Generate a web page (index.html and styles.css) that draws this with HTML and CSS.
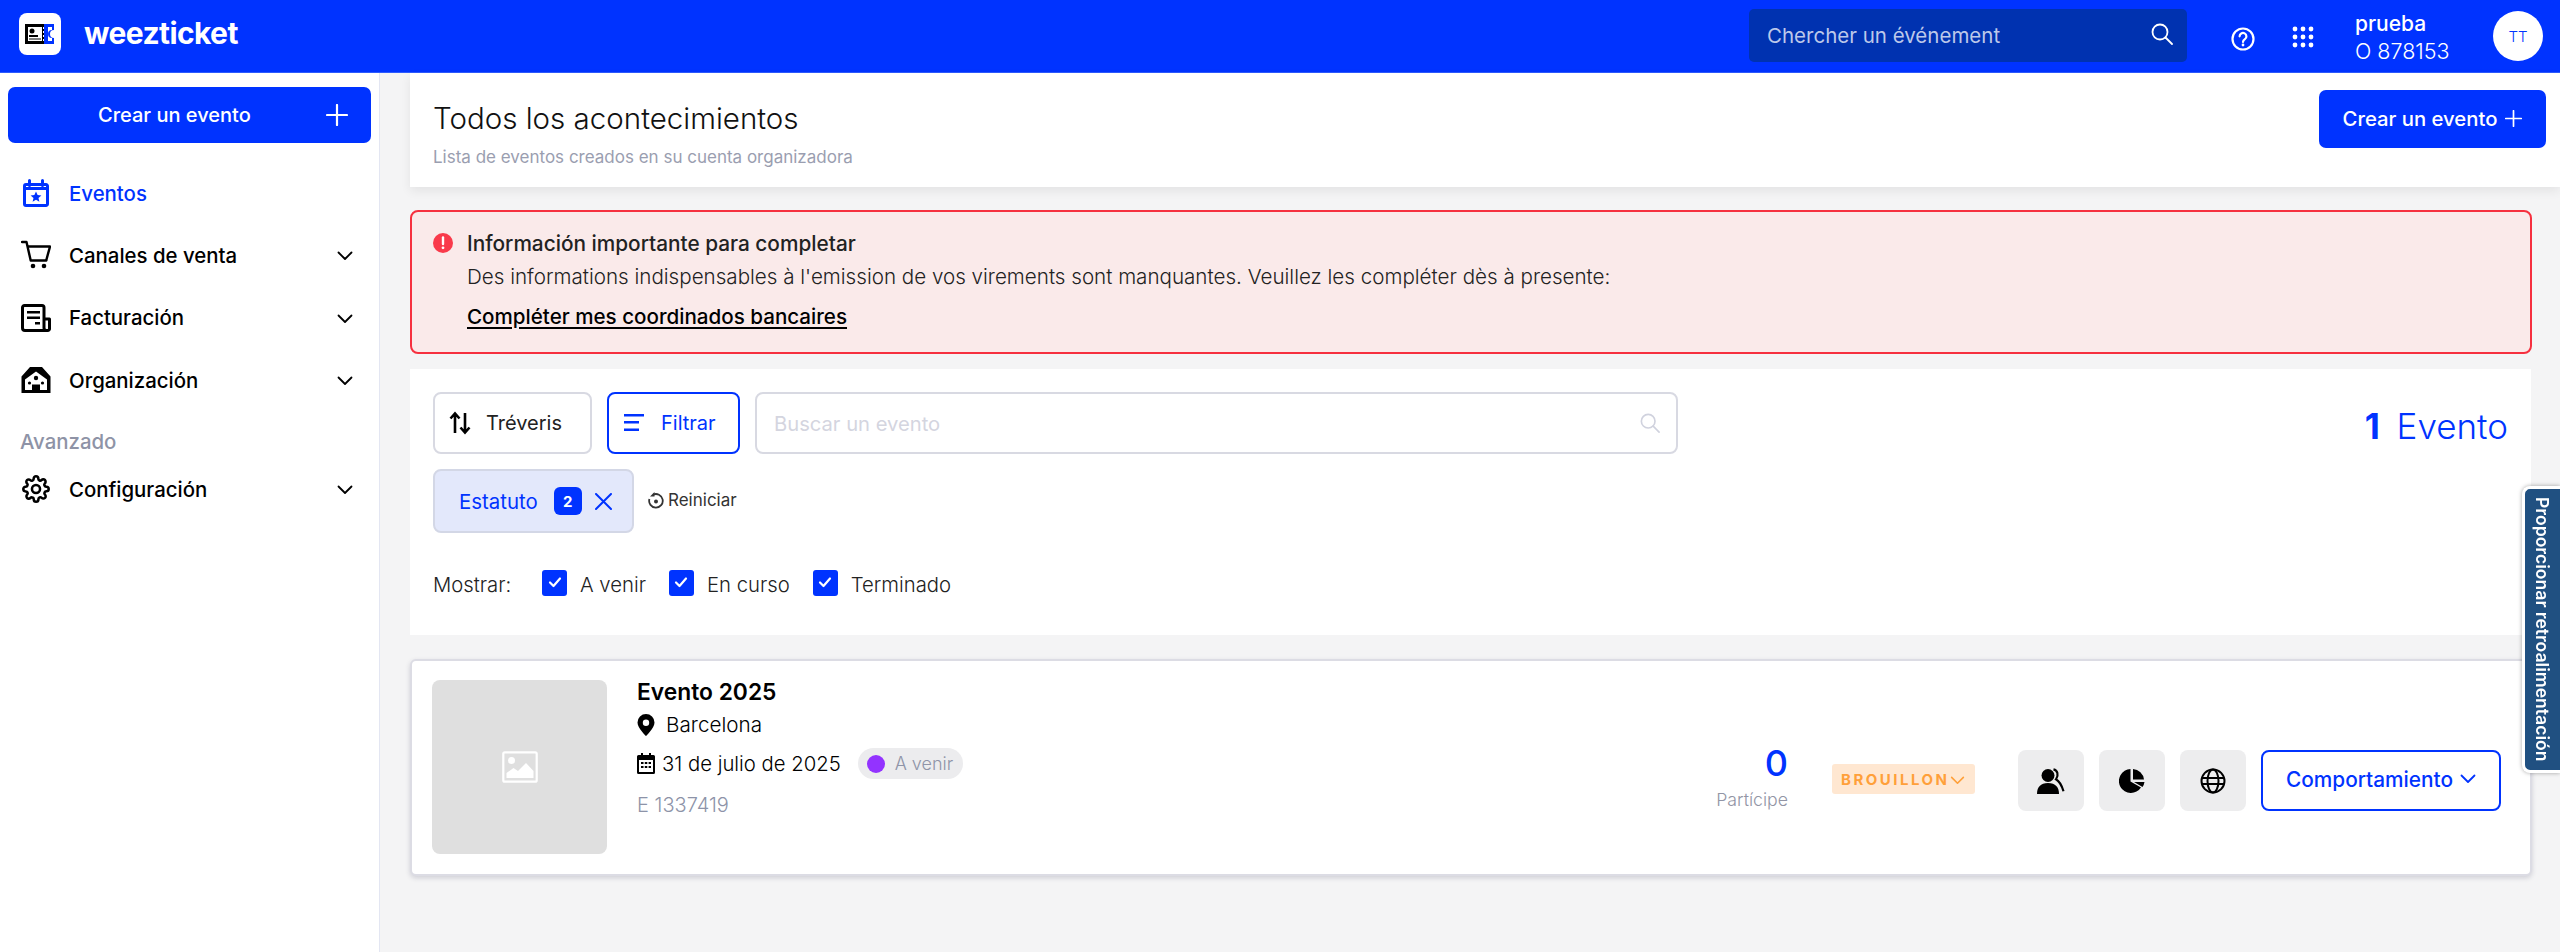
FILE: index.html
```html
<!DOCTYPE html>
<html lang="es">
<head>
<meta charset="utf-8">
<title>weezticket</title>
<link rel="stylesheet" href="styles.css">
</head>
<body>
<svg class="defs" aria-hidden="true">
  <symbol id="chev" viewBox="0 0 16 10"><path d="M1.5 1.5 8 8l6.500-6.500" fill="none" stroke="currentColor" stroke-width="1.800" stroke-linecap="round" stroke-linejoin="round"/></symbol>
  <symbol id="plus" viewBox="0 0 22 22"><path d="M11 1v20M1 11h20" fill="none" stroke="currentColor" stroke-width="2.200" stroke-linecap="round"/></symbol>
  <symbol id="search" viewBox="0 0 22 22"><circle cx="9" cy="9" r="7.500" fill="none" stroke="currentColor" stroke-width="1.800"/><path d="m14.500 14.500 6.500 6.500" fill="none" stroke="currentColor" stroke-width="1.800" stroke-linecap="round"/></symbol>
  <symbol id="check" viewBox="0 0 14 12"><path d="M2 6.500 5.500 10 12 2.500" fill="none" stroke="currentColor" stroke-width="2.200" stroke-linecap="round" stroke-linejoin="round"/></symbol>
</svg>

<header class="topbar">
  <div class="brand">
    <span class="logo">
      <svg width="30" height="20" viewBox="0 0 30 20"><path d="M1.500 1.500h17v17h-17z" fill="#fff" stroke="#000" stroke-width="3"/><path d="M19 0h10v6a4 4 0 0 0 0 8v6H19z" fill="#0033ff"/><path d="M23 3h4v3a4 4 0 0 0 0 8v3h-4z" fill="#fff"/><circle cx="7" cy="7" r="2.500"/><path d="M4 11h9v2H4zM4 14.500h12v1H4z"/><path d="M18.500 3v14" stroke="#fff" stroke-dasharray="2 2"/></svg>
    </span>
    <span class="wordmark">weezticket</span>
  </div>
  <div class="top-right">
    <div class="top-search">
      <span>Chercher un événement</span>
      <svg class="top-search-icon"><use href="#search"/></svg>
    </div>
    <svg class="help" width="24" height="24" viewBox="0 0 24 24"><circle cx="12" cy="12" r="10.500" fill="none" stroke="#fff" stroke-width="2.200"/><path d="M8.600 9.300a3.400 3.400 0 1 1 5.300 2.900c-1.200.8-1.900 1.300-1.900 2.700" fill="none" stroke="#fff" stroke-width="2.200" stroke-linecap="round"/><circle cx="12" cy="18" r="1.400" fill="#fff"/></svg>
    <svg class="apps" width="22" height="22" viewBox="0 0 22 22" fill="#fff"><circle cx="3" cy="3" r="2.400"/><circle cx="11" cy="3" r="2.400"/><circle cx="19" cy="3" r="2.400"/><circle cx="3" cy="11" r="2.400"/><circle cx="11" cy="11" r="2.400"/><circle cx="19" cy="11" r="2.400"/><circle cx="3" cy="19" r="2.400"/><circle cx="11" cy="19" r="2.400"/><circle cx="19" cy="19" r="2.400"/></svg>
    <div class="account">
      <span class="account-name">prueba</span>
      <span class="account-id">O 878153</span>
    </div>
    <span class="avatar">TT</span>
  </div>
</header>

<div class="shell">
  <aside class="sidebar">
    <button class="create-wide"><span>Crear un evento</span><svg class="plus-lg"><use href="#plus"/></svg></button>
    <nav class="nav">
      <a class="nav-row active">
        <svg class="nav-icon" viewBox="0 0 30 30"><path d="M5 6.500h20a1.500 1.500 0 0 1 1.500 1.500v18a1.500 1.500 0 0 1-1.500 1.500H5A1.500 1.500 0 0 1 3.500 26V8A1.500 1.500 0 0 1 5 6.500z" fill="none" stroke="currentColor" stroke-width="3"/><path d="M8.500 2.500v5M21.500 2.500v5" stroke="currentColor" stroke-width="3" stroke-linecap="round"/><path d="M3.500 9h23v3h-23z" fill="currentColor"/><path d="m15 13.500 1.600 3.500 3.800.4-2.900 2.500.9 3.800-3.400-2-3.400 2 .9-3.800-2.900-2.500 3.800-.4z" fill="currentColor"/></svg>
        <span class="nav-label">Eventos</span>
      </a>
      <a class="nav-row">
        <svg class="nav-icon" viewBox="0 0 30 30"><path d="M1 2h4.500l4.200 18.500h15.500" fill="none" stroke="currentColor" stroke-width="2.400" stroke-linecap="round" stroke-linejoin="round"/><path d="M6.500 6.500H29l-3.800 14" fill="none" stroke="currentColor" stroke-width="2.400" stroke-linejoin="round"/><circle cx="12" cy="26" r="2.300" fill="currentColor"/><circle cx="23" cy="26" r="2.300" fill="currentColor"/></svg>
        <span class="nav-label">Canales de venta</span>
        <svg class="nav-chev"><use href="#chev"/></svg>
      </a>
      <a class="nav-row">
        <svg class="nav-icon" viewBox="0 0 30 30"><path d="M23 16V4.500A2 2 0 0 0 21 2.500H3.500a2 2 0 0 0-2 2V25a2.500 2.500 0 0 0 2.500 2.500h22.500A2 2 0 0 0 28.500 25v-9z M23 16v9a2.500 2.500 0 0 0 2.500 2.500" fill="none" stroke="currentColor" stroke-width="3" stroke-linejoin="round"/><path d="M6 8h13v2.500H6zM6 13.500h13V16H6zM14 19h5v2.500h-5z" fill="currentColor"/></svg>
        <span class="nav-label">Facturación</span>
        <svg class="nav-chev"><use href="#chev"/></svg>
      </a>
      <a class="nav-row">
        <svg class="nav-icon" viewBox="0 0 30 30"><path fill-rule="evenodd" d="M9 2h12l8.500 9.500V28H.5V11.500zM15 6.500 4 14.500V25h7v-5.500h8V25h7V14.500z" fill="currentColor"/><circle cx="15" cy="13" r="2.200" fill="currentColor"/><circle cx="8.500" cy="18" r="1.600" fill="currentColor"/><circle cx="21.500" cy="18" r="1.600" fill="currentColor"/></svg>
        <span class="nav-label">Organización</span>
        <svg class="nav-chev"><use href="#chev"/></svg>
      </a>
      <div class="nav-section">Avanzado</div>
      <a class="nav-row">
        <svg class="nav-icon" viewBox="-1 -1 26 26"><circle cx="12" cy="12" r="3.500" fill="none" stroke="currentColor" stroke-width="2.200"/><path d="M19.400 15a1.650 1.650 0 0 0 .33 1.820l.06.06a2 2 0 0 1 0 2.830 2 2 0 0 1-2.830 0l-.06-.06a1.650 1.650 0 0 0-1.820-.33 1.650 1.650 0 0 0-1 1.510V21a2 2 0 0 1-2 2 2 2 0 0 1-2-2v-.09A1.650 1.650 0 0 0 9 19.400a1.650 1.650 0 0 0-1.820.33l-.06.06a2 2 0 0 1-2.830 0 2 2 0 0 1 0-2.830l.06-.06a1.650 1.650 0 0 0 .33-1.820 1.650 1.650 0 0 0-1.510-1H3a2 2 0 0 1-2-2 2 2 0 0 1 2-2h.09A1.650 1.650 0 0 0 4.600 9a1.650 1.650 0 0 0-.33-1.820l-.06-.06a2 2 0 0 1 0-2.830 2 2 0 0 1 2.830 0l.06.06a1.650 1.650 0 0 0 1.820.33H9a1.650 1.650 0 0 0 1-1.510V3a2 2 0 0 1 2-2 2 2 0 0 1 2 2v.09a1.650 1.650 0 0 0 1 1.510 1.650 1.650 0 0 0 1.820-.33l.06-.06a2 2 0 0 1 2.830 0 2 2 0 0 1 0 2.830l-.06.06a1.650 1.650 0 0 0-.33 1.820V9a1.650 1.650 0 0 0 1.510 1H21a2 2 0 0 1 2 2 2 2 0 0 1-2 2h-.09a1.650 1.650 0 0 0-1.510 1z" fill="none" stroke="currentColor" stroke-width="2.200" stroke-linejoin="round"/></svg>
        <span class="nav-label">Configuración</span>
        <svg class="nav-chev"><use href="#chev"/></svg>
      </a>
    </nav>
  </aside>

  <main class="main">
    <section class="page-head">
      <div class="page-heading">
        <h1 class="page-title">Todos los acontecimientos</h1>
        <p class="page-sub">Lista de eventos creados en su cuenta organizadora</p>
      </div>
      <button class="create-btn"><span>Crear un evento</span><svg class="plus-sm"><use href="#plus"/></svg></button>
    </section>

    <div class="content">
      <section class="alert">
        <svg class="alert-icon" width="20" height="20" viewBox="0 0 20 20"><circle cx="10" cy="10" r="10" fill="#f93a4b"/><path d="M10 4.500v6.500" stroke="#fff" stroke-width="2.400" stroke-linecap="round"/><circle cx="10" cy="14.800" r="1.400" fill="#fff"/></svg>
        <div>
          <div class="alert-title">Información importante para completar</div>
          <div class="alert-text">Des informations indispensables à l'emission de vos virements sont manquantes. Veuillez les compléter dès à presente:</div>
          <a class="alert-link">Compléter mes coordinados bancaires</a>
        </div>
      </section>

      <section class="filters">
        <div class="filter-row">
          <button class="tool-btn sort-btn">
            <svg width="22" height="24" viewBox="0 0 22 24"><path d="M6 22V3M1.500 7.500 6 2.500l4.500 5M16 2v19M11.500 16.500 16 21.500l4.500-5" fill="none" stroke="#000" stroke-width="2.600"/></svg>
            <span>Tréveris</span>
          </button>
          <button class="tool-btn filter-btn">
            <svg width="20" height="18" viewBox="0 0 20 18" fill="#0033ff"><path d="M0 0h20v2.600H0zM0 7h15v2.600H0zM0 14.400h15V17H0z"/></svg>
            <span>Filtrar</span>
          </button>
          <div class="search-box">
            <span>Buscar un evento</span>
            <svg class="search-box-icon"><use href="#search"/></svg>
          </div>
          <div class="total"><b>1</b> Evento</div>
        </div>
        <div class="chip-row">
          <div class="chip">
            <span class="chip-label">Estatuto</span>
            <span class="chip-count">2</span>
            <svg width="17" height="17" viewBox="0 0 17 17"><path d="m1 1 15 15M16 1 1 16" stroke="#0033ff" stroke-width="2" stroke-linecap="round"/></svg>
          </div>
          <a class="reset">
            <svg width="16" height="17" viewBox="0 0 16 17"><path d="M5 2.700A6.800 6.800 0 1 1 1.400 7" fill="none" stroke="#333" stroke-width="1.800"/><path d="M6.500 0v4.500H2z" fill="#333"/><circle cx="8" cy="9.500" r="2" fill="#333"/></svg>
            <span>Reiniciar</span>
          </a>
        </div>
        <div class="show-row">
          <span class="show-label">Mostrar:</span>
          <label class="check"><span class="box"><svg><use href="#check"/></svg></span><span class="check-text">A venir</span></label>
          <label class="check"><span class="box"><svg><use href="#check"/></svg></span><span class="check-text">En curso</span></label>
          <label class="check"><span class="box"><svg><use href="#check"/></svg></span><span class="check-text">Terminado</span></label>
        </div>
      </section>

      <article class="card">
        <div class="thumb">
          <svg width="36" height="32" viewBox="0 0 36 32"><rect x="1.300" y="1.300" width="33.400" height="29.400" rx="1.500" fill="none" stroke="#fff" stroke-width="2.200"/><circle cx="9.500" cy="9.500" r="3.500" fill="#fff"/><path d="M4.500 27v-5l7-5 4.500 3 8-8 7.500 8v7z" fill="#fff"/></svg>
        </div>
        <div class="info">
          <h2 class="event-name">Evento 2025</h2>
          <div class="event-place">
            <svg width="18" height="22" viewBox="0 0 18 22"><path fill-rule="evenodd" d="M9 0a8.500 8.500 0 0 1 8.500 8.500C17.500 14 9 22 9 22S.5 14 .5 8.500A8.500 8.500 0 0 1 9 0zm0 5.500a3.200 3.200 0 1 0 0 6.400 3.200 3.200 0 0 0 0-6.400z"/></svg>
            <span>Barcelona</span>
          </div>
          <div class="event-date">
            <svg width="18" height="21" viewBox="0 0 18 21"><path fill-rule="evenodd" d="M4 0h2v2h6V0h2v2h2.500A1.500 1.500 0 0 1 18 3.500v16a1.500 1.500 0 0 1-1.500 1.500h-15A1.500 1.500 0 0 1 0 19.500v-16A1.500 1.500 0 0 1 1.500 2H4zM2 7v12h14V7z"/><path d="M4 9h2.500v2H4zM7.800 9h2.500v2H7.800zM11.600 9H14v2h-2.400zM4 13h2.500v2H4zM7.800 13h2.500v2H7.800zM11.600 13H14v2h-2.400z"/></svg>
            <span class="date-text">31 de julio de 2025</span>
            <span class="pill"><i class="pill-dot"></i>A venir</span>
          </div>
          <div class="event-id">E 1337419</div>
        </div>
        <div class="stat">
          <span class="stat-num">0</span>
          <span class="stat-label">Partícipe</span>
        </div>
        <div class="draft"><span>BROUILLON</span><svg class="draft-chev"><use href="#chev"/></svg></div>
        <div class="actions">
          <button class="icon-btn">
            <svg width="28" height="26" viewBox="0 0 28 26"><circle cx="11" cy="7.500" r="6.500"/><path d="M0 26c0-7 3.500-11 11-11s11 4 11 11z"/><path d="M16.500 1.300c4 .7 5.500 6 2.500 10 3.500 2 6 7 7.500 12" fill="none" stroke="#000" stroke-width="2.200"/></svg>
          </button>
          <button class="icon-btn">
            <svg width="26" height="26" viewBox="0 0 26 26"><path d="M11.500 1A12 12 0 1 0 22 19.500l-10.500-6z"/><path d="M14 1a11.800 11.800 0 0 1 11 10.500H14zM15 14h10.500a12 12 0 0 1-2 5z"/></svg>
          </button>
          <button class="icon-btn">
            <svg width="26" height="26" viewBox="0 0 26 26" fill="none" stroke="#000" stroke-width="2"><circle cx="13" cy="13" r="11.500"/><ellipse cx="13" cy="13" rx="5.500" ry="11.500"/><path d="M1.500 10h23M1.500 16h23"/></svg>
          </button>
          <button class="behave-btn"><span>Comportamiento</span><svg class="behave-chev"><use href="#chev"/></svg></button>
        </div>
      </article>
    </div>
  </main>
</div>

<div class="feedback">Proporcionar retroalimentación</div>
</body>
</html>
```

FILE: styles.css
```css
* { box-sizing: border-box; }
html, body { margin: 0; padding: 0; }
body {
  width: 2560px;
  height: 952px;
  overflow: hidden;
  font-family: Inter, "Liberation Sans", sans-serif;
  color: #111;
  background: #f4f4f5;
}
button { font: inherit; cursor: pointer; }
h1, h2, p { margin: 0; }
svg { display: block; flex: none; }
.defs { position: absolute; width: 0; height: 0; }

.topbar {
  height: 73px;
  background: #0033ff;
  border-bottom: 1px solid #2d5bff;
  display: flex;
  align-items: center;
  justify-content: space-between;
  padding: 0 17px 0 19px;
}
.brand { display: flex; align-items: center; gap: 23px; margin-top: -4px; }
.logo {
  width: 42px;
  height: 42px;
  background: #fff;
  border-radius: 8px;
  display: flex;
  align-items: center;
  justify-content: center;
}
.wordmark { color: #fff; font-size: 30px; font-weight: 700; letter-spacing: -0.6px; margin-bottom: 3px; }
.top-right { display: flex; align-items: center; }
.top-search {
  width: 438px;
  height: 53px;
  background: #0032b0;
  border-radius: 5px;
  padding: 0 14px 0 18px;
  margin-top: -1px;
  display: flex;
  align-items: center;
  justify-content: space-between;
  color: #bcc8ea;
  font-size: 20.500px;
}
.top-search-icon { width: 22px; height: 22px; color: #fff; margin-top: -3px; }
.help { margin-left: 44px; margin-top: 5px; }
.apps { margin-left: 37px; margin-top: 2px; }
.account { margin-left: 41px; width: 138px; display: flex; flex-direction: column; gap: 2px; color: #fff; padding-top: 3px; }
.account-name { font-weight: 500; font-size: 21px; line-height: 24px; }
.account-id { font-size: 21.500px; font-weight: 300; line-height: 26px; }
.avatar {
  width: 50px;
  height: 50px;
  border-radius: 50%;
  background: #fff;
  color: #0033ff;
  font-size: 15px;
  font-weight: 300;
  display: flex;
  align-items: center;
  justify-content: center;
}

.shell { display: flex; height: 879px; }
.sidebar {
  width: 380px;
  flex: none;
  background: #fff;
  border-right: 1px solid #e3e6f2;
  padding-top: 14px;
}
.create-wide {
  width: 363px;
  height: 56px;
  margin-left: 8px;
  border: 0;
  border-radius: 7px;
  background: #0033ff;
  color: #fff;
  font-size: 20px;
  font-weight: 500;
  display: flex;
  align-items: center;
  justify-content: space-between;
  padding: 0 23px 0 90px;
}
.plus-lg { width: 22px; height: 22px; }
.nav { margin-top: 19px; }
.nav-row {
  height: 62.300px;
  display: flex;
  align-items: center;
  padding: 0 26px 0 21px;
  color: #000;
}
.nav-row.active { color: #0033ff; }
.nav-icon { width: 30px; height: 30px; }
.nav-label { margin-left: 18px; font-size: 20.400px; font-weight: 500; flex: 1; }
.nav-chev { width: 16px; height: 10px; margin-top: 2px; }
.nav-section {
  padding: 19px 0 0 20px;
  height: 47px;
  color: #8e93a6;
  font-size: 20.400px;
  font-weight: 500;
  line-height: 24px;
}

.main { flex: 1; min-width: 0; }
.page-head {
  margin-left: 30px;
  height: 114px;
  background: #fff;
  box-shadow: 0 4px 10px rgba(0, 0, 0, 0.07);
  display: flex;
  align-items: flex-start;
  justify-content: space-between;
  padding: 17px 14px 0 23px;
}
.page-heading { margin-top: 7px; }
.page-title { font-size: 29.500px; font-weight: 300; line-height: 42px; color: #111; }
.page-sub { margin-top: 7px; font-size: 17px; font-weight: 400; color: #9a9eb0; line-height: 22px; }
.create-btn {
  width: 227px;
  height: 58px;
  border: 0;
  border-radius: 7px;
  background: #0033ff;
  color: #fff;
  font-size: 20.300px;
  font-weight: 500;
  display: flex;
  align-items: center;
  justify-content: center;
  gap: 8px;
  padding-bottom: 2px;
}
.plus-sm { width: 17px; height: 17px; }

.content { padding: 23px 28px 0 30px; }
.alert {
  height: 144px;
  background: #faeaea;
  border: 2px solid #f6303f;
  border-radius: 8px;
  display: flex;
  gap: 14px;
  padding: 19px 21px 0;
}
.alert-icon { margin-top: 2px; }
.alert-title { font-size: 20.800px; font-weight: 500; line-height: 26px; color: #222; }
.alert-text { margin-top: 7px; font-size: 20.600px; font-weight: 300; line-height: 26px; color: #222; }
.alert-link { display: block; margin-top: 14px; font-size: 20.600px; font-weight: 500; line-height: 26px; color: #000; text-decoration: underline; text-underline-offset: 3px; }

.filters {
  margin-top: 15px;
  margin-right: 1px;
  height: 266px;
  background: #fff;
  padding: 23px 23px 0;
}
.filter-row { display: flex; align-items: center; height: 62px; }
.tool-btn {
  height: 62px;
  background: #fff;
  border-radius: 8px;
  display: flex;
  align-items: center;
  font-size: 20px;
  padding: 0;
}
.sort-btn { width: 159px; border: 2px solid #d8d9e2; color: #222; gap: 15px; padding-left: 14px; margin-right: 15px; }
.filter-btn { width: 133px; border: 2px solid #0033ff; color: #0033ff; gap: 17px; padding-left: 15px; margin-right: 15px; }
.search-box {
  width: 923px;
  height: 62px;
  border: 2px solid #d8d9e2;
  border-radius: 8px;
  display: flex;
  align-items: center;
  justify-content: space-between;
  padding: 0 16px 0 17px;
  color: #d4d5df;
  font-size: 20.200px;
}
.search-box-icon { width: 20px; height: 20px; color: #d0d2de; }
.total { margin-left: auto; margin-top: 5px; color: #0033ff; font-size: 35px; font-weight: 300; }
.total b { font-weight: 700; margin-right: 7px; }
.chip-row { display: flex; align-items: center; margin-top: 15px; }
.chip {
  width: 201px;
  height: 64px;
  background: #e3e8fb;
  border: 2px solid #d3d7e6;
  border-radius: 8px;
  display: flex;
  align-items: center;
  padding-left: 24px;
}
.chip-label { color: #0033ff; font-size: 20.400px; font-weight: 400; }
.chip-count {
  width: 28px;
  height: 28px;
  margin: 0 13px 0 16px;
  border-radius: 6px;
  background: #0033ff;
  color: #fff;
  font-size: 15px;
  font-weight: 700;
  display: flex;
  align-items: center;
  justify-content: center;
}
.reset { display: flex; align-items: center; gap: 4px; margin-left: 14px; margin-top: -2px; font-size: 17px; color: #333; }
.show-row { display: flex; align-items: center; height: 26px; margin-top: 37px; font-size: 20.300px; font-weight: 300; color: #222; }
.show-label { width: 109px; padding-top: 2px; }
.check { display: flex; align-items: center; gap: 13px; margin-right: 23px; }
.check-text { padding-top: 2px; }
.box {
  width: 25px;
  height: 26px;
  border-radius: 3px;
  background: #0033ff;
  color: #fff;
  display: flex;
  align-items: center;
  justify-content: center;
}
.box svg { width: 14px; height: 12px; margin-top: -3px; }

.card {
  margin-top: 24px;
  height: 217px;
  background: #fff;
  border: 2px solid #dcdce4;
  border-radius: 6px;
  box-shadow: 0 2px 5px rgba(40, 40, 70, 0.18);
  display: flex;
  padding: 19px 29px 0 20px;
}
.thumb {
  width: 175px;
  height: 174px;
  background: #dfdfdf;
  border-radius: 8px;
  display: flex;
  align-items: center;
  justify-content: center;
}
.info { margin-left: 30px; flex: 1; }
.event-name { font-size: 22.800px; font-weight: 600; line-height: 26px; margin-top: -1px; color: #000; }
.event-place { display: flex; align-items: center; gap: 11px; margin-top: 8px; font-size: 20.700px; font-weight: 300; line-height: 24px; color: #000; }
.event-date { display: flex; align-items: center; margin-top: 11px; height: 31px; font-size: 20.300px; font-weight: 300; color: #000; }
.date-text { margin-left: 7px; }
.pill {
  margin-left: 17px;
  height: 31px;
  width: 105px;
  border-radius: 16px;
  background: #ececee;
  color: #8f94a8;
  font-size: 18px;
  font-weight: 300;
  display: flex;
  align-items: center;
  gap: 10px;
  padding-left: 9px;
}
.pill-dot { width: 18px; height: 18px; border-radius: 50%; background: #9333ff; }
.event-id { margin-top: 14px; font-size: 20px; font-weight: 300; line-height: 24px; color: #8d93a8; }
.stat { display: flex; flex-direction: column; align-items: flex-end; width: 90px; margin-top: 64px; }
.stat-num { color: #0033ff; font-size: 36px; font-weight: 500; line-height: 38px; }
.stat-label { margin-top: 7px; color: #9295a5; font-size: 17.700px; font-weight: 300; line-height: 22px; white-space: nowrap; }
.draft {
  width: 143px;
  height: 30px;
  margin: 84px 0 0 44px;
  background: #ffe7d1;
  border-radius: 3px;
  color: #ffa03a;
  font-size: 15px;
  font-weight: 700;
  letter-spacing: 2.500px;
  display: flex;
  align-items: center;
  padding-left: 9px;
}
.draft-chev { width: 15px; height: 9px; margin-top: 2px; }
.actions { display: flex; margin: 70px 0 0 43px; gap: 15px; height: 61px; }
.icon-btn {
  width: 66px;
  height: 61px;
  border: 0;
  border-radius: 8px;
  background: #ededee;
  display: flex;
  align-items: center;
  justify-content: center;
}
.behave-btn {
  width: 240px;
  height: 61px;
  border: 2px solid #0033ff;
  border-radius: 8px;
  background: #fff;
  color: #0033ff;
  font-size: 20.800px;
  font-weight: 500;
  display: flex;
  align-items: center;
  justify-content: center;
  gap: 7px;
  padding: 0 0 3px;
}
.behave-chev { width: 16px; height: 10px; }

.feedback {
  position: fixed;
  top: 486px;
  right: 0;
  width: 38px;
  height: 287px;
  background: #205081;
  border: 3px solid #fff;
  border-right: 0;
  border-radius: 8px 0 0 8px;
  box-shadow: 0 0 4px rgba(0, 0, 0, 0.35);
  color: #fff;
  font-size: 17.600px;
  font-weight: 600;
  writing-mode: vertical-rl;
  display: flex;
  align-items: center;
  justify-content: center;
}
```
